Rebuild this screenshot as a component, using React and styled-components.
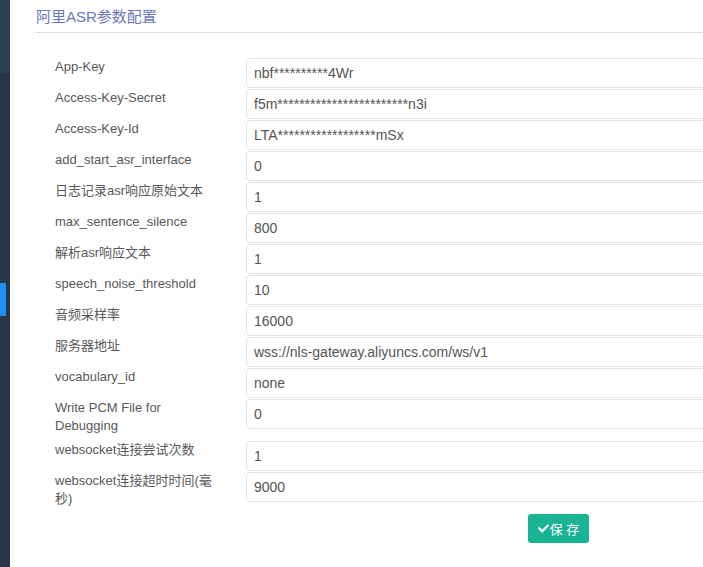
import React from "react";
import styled, { createGlobalStyle } from "styled-components";
import { FaCheck } from "react-icons/fa";

const fields = [
    { label: "App-Key", value: "nbf**********4Wr" },
    { label: "Access-Key-Secret", value: "f5m************************n3i" },
    { label: "Access-Key-Id", value: "LTA******************mSx" },
    { label: "add_start_asr_interface", value: "0" },
    { label: "日志记录asr响应原始文本", value: "1" },
    { label: "max_sentence_silence", value: "800" },
    { label: "解析asr响应文本", value: "1" },
    { label: "speech_noise_threshold", value: "10" },
    { label: "音频采样率", value: "16000" },
    { label: "服务器地址", value: "wss://nls-gateway.aliyuncs.com/ws/v1" },
    { label: "vocabulary_id", value: "none" },
    { label: "Write PCM File for Debugging", value: "0" },
    { label: "websocket连接尝试次数", value: "1" },
    { label: "websocket连接超时时间(毫秒)", value: "9000" },
];

function App() {
    return (
        <>
            <GlobalStyle />
            <Layout>
                <Sidebar>
                    <SidebarTop />
                    <ActiveMarker />
                </Sidebar>
                <Main>
                    <Header>
                        <Title>阿里ASR参数配置</Title>
                    </Header>
                    <Form>
                        {fields.map((f) => (
                            <Row key={f.label}>
                                <Label>{f.label}</Label>
                                <Input defaultValue={f.value} readOnly />
                            </Row>
                        ))}
                        <Actions>
                            <SaveButton>
                                <FaCheck size={11} />
                                保 存
                            </SaveButton>
                        </Actions>
                    </Form>
                </Main>
            </Layout>
        </>
    );
}

export default App;

const GlobalStyle = createGlobalStyle`
    body {
        margin: 0;
        overflow: hidden;
        background: #fff;
        font-family: "Liberation Sans", Arial, "Noto Sans CJK SC", sans-serif;
    }
`;

const Layout = styled.div`
    display: flex;
    height: 567px;
    width: 703px;
    overflow: hidden;
`;

const Sidebar = styled.div`
    flex: 0 0 10px;
    background: #283747;
    display: flex;
    flex-direction: column;
`;

const SidebarTop = styled.div`
    height: 73px;
    background: #2d3e50;
`;

const ActiveMarker = styled.div`
    margin-top: 210px;
    width: 6px;
    height: 33px;
    background: #1e8ff5;
`;

const Main = styled.div`
    flex: 1;
    min-width: 0;
    padding-left: 25px;
    overflow: hidden;
`;

const Header = styled.div`
    padding: 7px 0 5px 1px;
    border-bottom: 1px solid #dedede;
`;

const Title = styled.h3`
    margin: 0;
    font-size: 15px;
    line-height: 20px;
    font-weight: normal;
    color: #6a78b8;
`;

const Form = styled.div`
    margin-top: 25px;
    padding-left: 20px;
`;

const Row = styled.div`
    display: flex;
    align-items: flex-start;
    margin-bottom: 1px;
`;

const Label = styled.div`
    flex: 0 0 191px;
    box-sizing: border-box;
    padding: 0 26px 5px 0;
    font-size: 13px;
    line-height: 18px;
    color: #595959;
`;

const Input = styled.input`
    flex: 0 0 600px;
    box-sizing: border-box;
    height: 30px;
    padding: 0 7px;
    border: 1px solid #e3e3e3;
    border-radius: 4px;
    font-family: inherit;
    font-size: 14px;
    color: #555;
    outline: none;
`;

const Actions = styled.div`
    padding: 0 0 0 473px;
`;

const SaveButton = styled.button`
    display: inline-flex;
    align-items: center;
    gap: 1px;
    height: 29px;
    width: 61px;
    justify-content: center;
    padding: 0;
    border: none;
    border-radius: 3px;
    background: #1ab394;
    color: #fff;
    font-family: inherit;
    font-size: 13px;
    cursor: pointer;
`;
